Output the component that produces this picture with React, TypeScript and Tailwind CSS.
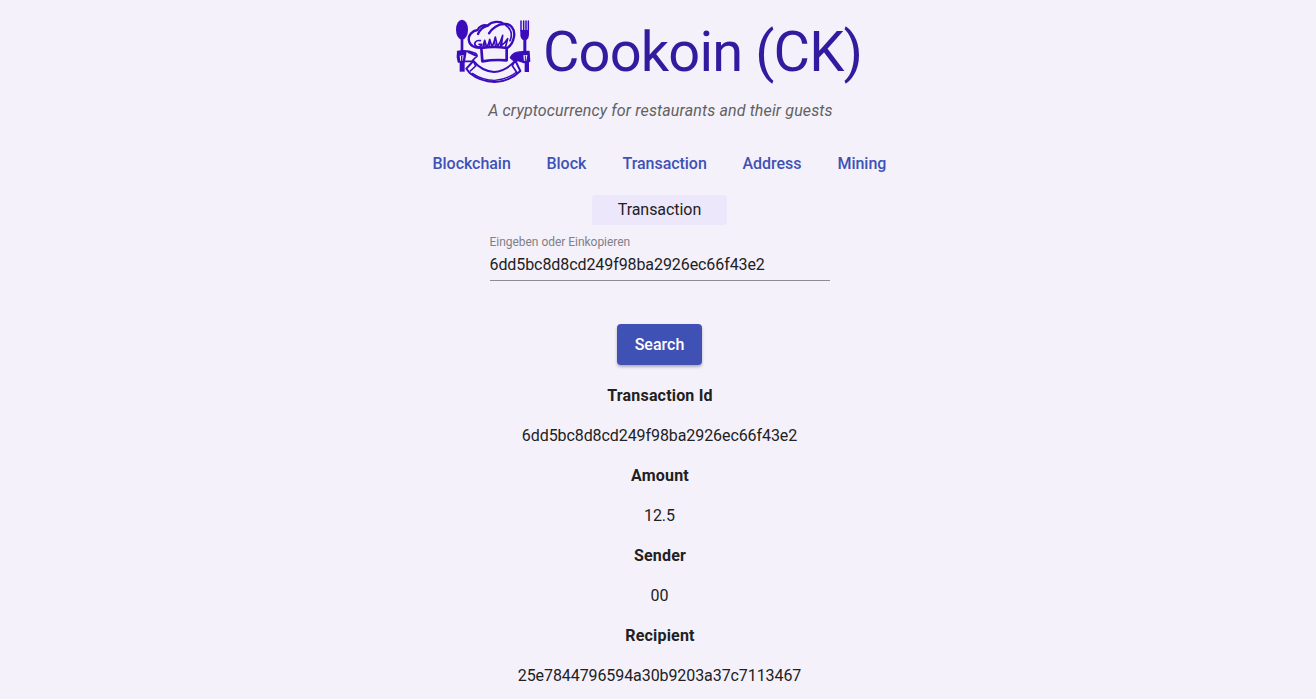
const INK = '#3a0cbb';

function Logo() {
  return (
    <svg className="h-[76px] w-[90px] shrink-0" viewBox="0 0 270 228" fill="none" stroke={INK} strokeWidth="6" strokeLinecap="round" strokeLinejoin="round">
      <ellipse cx="36" cy="53" rx="18" ry="30" fill={INK} stroke="none" />
      <path d="M36 80V118" strokeWidth="8" />
      <path d="M213 27V56M221 27V56M228 27V56M235 27V56" strokeWidth="4.5" />
      <path d="M211 54H237V68Q237 79 229 85V118H220V85Q211 79 211 68Z" fill={INK} stroke="none" />
      <path d="M92 107C74 109 60 101 57 87C53 70 67 56 83 54C86 43 101 37 113 41C125 28 151 26 161 36C182 33 196 53 192 74C189 91 182 101 173 107" strokeWidth="7" />
      <path d="M113 41C99 45 89 54 84 66M161 36C146 36 126 48 117 64" strokeWidth="7" />
      <path d="M166 39C184 49 188 68 180 86" strokeWidth="5" />
      <path d="M91 86C78 83 70 94 77 101C83 107 94 105 95 97H87" strokeWidth="5" />
      <path d="M98 107L104 85L110 106Q118 93 119 82L126 105Q134 88 136 75L142 104Q154 86 158 70L154 101Q166 92 173 80L166 107" strokeWidth="5" />
      <path d="M104 92L105 106M118 93V106M134 91L137 105M155 86L150 104" strokeWidth="4" />
      <path d="M94 108Q132 102 170 108V145Q133 142 97 148Z" strokeWidth="8" />
      <path d="M23 119Q48 113 74 123Q82 127 81 133Q72 139 66 148H46" strokeWidth="5" />
      <path d="M23 119L48 119L43 150H25Q20 133 23 119Z" fill={INK} strokeWidth="4" />
      <path d="M29 131L41 130L38 146L31 147Z" fill="#f4f1fb" stroke="none" />
      <path d="M55 120L76 130" strokeWidth="6" />
      <path d="M29 149H44V179H29Z" fill={INK} stroke="none" />
      <path d="M35 133V148" strokeWidth="4" />
      <path d="M181 137Q190 119 215 119L237 118L239 148L222 152L205 146Q191 150 181 137Z" fill={INK} strokeWidth="4" />
      <path d="M224 145H237V180H224Z" fill={INK} stroke="none" />
      <path d="M220 130L232 129L229 146L222 147Z" fill="#f4f1fb" stroke="none" />
      <path d="M226 132V147" strokeWidth="3" />
      <path d="M70 147L49 170L59 183Q91 209 134 210Q180 208 211 177L196 146Q167 178 132 180Q95 177 70 147Z" strokeWidth="6" />
      <path d="M70 147L77 162L61 177M196 146L187 161L201 182" strokeWidth="5" />
      <path d="M67 184Q98 205 134 205Q171 203 199 181" strokeWidth="4" />
    </svg>
  );
}

const links = [
  { label: 'Blockchain', width: 'w-[78px]' },
  { label: 'Block', width: 'w-[40px]' },
  { label: 'Transaction', width: 'w-[84px]' },
  { label: 'Address', width: 'w-[59px]' },
  { label: 'Mining', width: 'w-[49px]' },
];

const details = [
  ['Transaction Id', '6dd5bc8d8cd249f98ba2926ec66f43e2'],
  ['Amount', '12.5'],
  ['Sender', '00'],
  ['Recipient', '25e7844796594a30b9203a37c7113467'],
];

export default function App() {
  return (
    <main className="flex h-[699px] w-full flex-col items-center overflow-hidden bg-[#f4f1fb] pl-[3px] font-[Roboto,sans-serif] text-base leading-5 text-[#212121]">
      <header className="flex shrink-0 flex-col items-center">
        <div className="mt-3 flex h-[76px] items-center pr-[5px]">
          <Logo />
          <h1 className="ml-[3px] mt-1 w-[321px] whitespace-nowrap text-[56px] leading-[76px] tracking-[-0.85px] text-[#311b9e]">Cookoin (CK)</h1>
        </div>
        <p className="mt-[13px] pl-[2px] italic tracking-[0.14px] text-[#616161]">A cryptocurrency for restaurants and their guests</p>
      </header>
      <nav className="mt-[33px] flex shrink-0 gap-9 font-medium text-[#3f51b5]">
        {links.map(({ label, width }) => (
          <a key={label} className={`${width} whitespace-nowrap tracking-[-0.04px]`}>{label}</a>
        ))}
      </nav>
      <h2 className="mt-[21px] flex h-[30px] w-[135px] shrink-0 items-center justify-center rounded-[3px] bg-[#ede7fc] tracking-[-0.05px]">Transaction</h2>
      <label className="mt-[9px] flex h-[47px] w-[340px] shrink-0 flex-col border-b border-[#8e8c93]">
        <span className="text-xs leading-4 tracking-[-0.03px] text-[#817f86]">Eingeben oder Einkopieren</span>
        <input className="mt-[5px] h-5 w-full bg-transparent p-0 tracking-[-0.08px] outline-none" defaultValue="6dd5bc8d8cd249f98ba2926ec66f43e2" />
      </label>
      <button className="mt-[43px] h-[41px] w-[85px] shrink-0 rounded bg-[#3f51b5] font-medium text-white shadow-[0_2px_3px_rgba(0,0,0,0.28)]">Search</button>
      <dl className="mt-[21px] shrink-0 text-center">
        {details.map(([term, value]) => (
          <div key={term} className="mb-5">
            <dt className="pl-px font-bold tracking-[0.18px]">{term}</dt>
            <dd className="mt-5 tracking-[-0.08px]">{value}</dd>
          </div>
        ))}
      </dl>
    </main>
  );
}
